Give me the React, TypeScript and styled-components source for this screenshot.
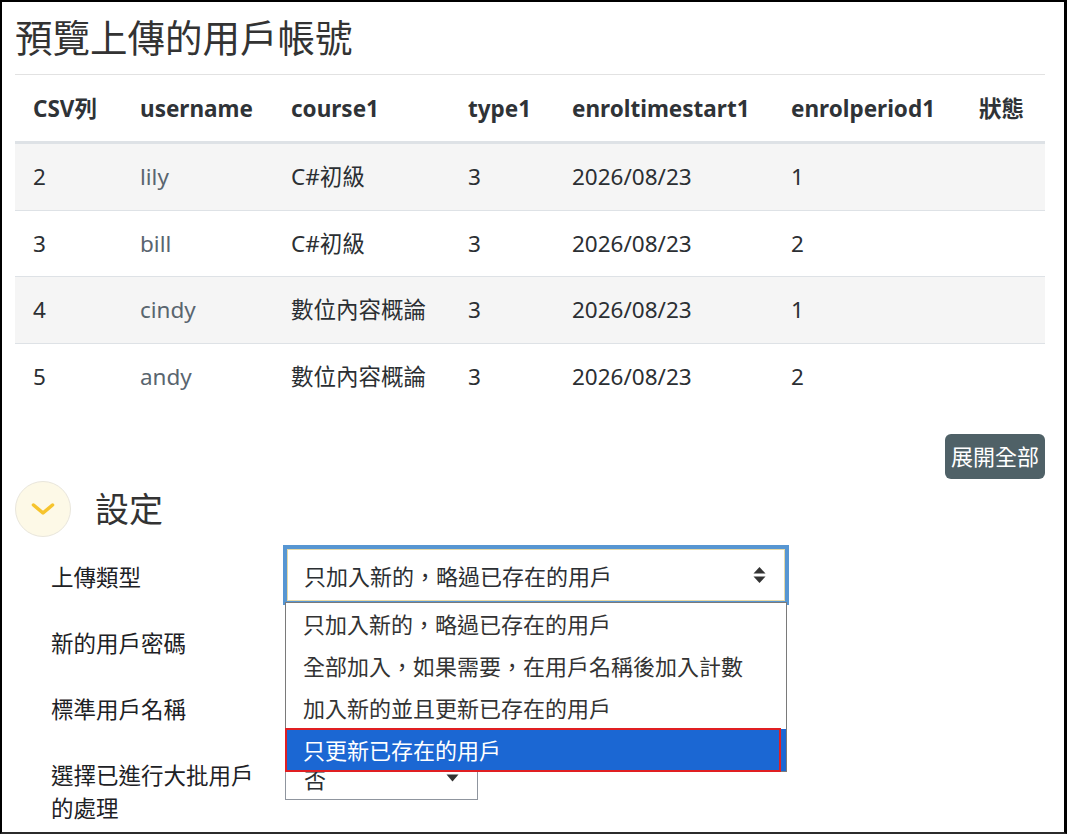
import styled, { createGlobalStyle } from 'styled-components';

const GlobalStyle = createGlobalStyle`
  html, body {
    margin: 0;
    padding: 0;
    background: #fff;
  }
  body {
    font-family: 'Noto Sans', 'Noto Sans CJK TC', sans-serif;
    color: #1d2125;
  }
  * {
    box-sizing: border-box;
  }
`;

interface IRow {
  csv: number;
  username: string;
  course: string;
  type: number;
  start: string;
  period: number;
}

const COLUMNS = ['CSV列', 'username', 'course1', 'type1', 'enroltimestart1', 'enrolperiod1', '狀態'];
const COL_WIDTHS = [107, 151, 177, 104, 219, 188, 84];

const ROWS: IRow[] = [
  { csv: 2, username: 'lily', course: 'C#初級', type: 3, start: '2026/08/23', period: 1 },
  { csv: 3, username: 'bill', course: 'C#初級', type: 3, start: '2026/08/23', period: 2 },
  { csv: 4, username: 'cindy', course: '數位內容概論', type: 3, start: '2026/08/23', period: 1 },
  { csv: 5, username: 'andy', course: '數位內容概論', type: 3, start: '2026/08/23', period: 2 },
];

const UPLOAD_TYPES = [
  '只加入新的，略過已存在的用戶',
  '全部加入，如果需要，在用戶名稱後加入計數',
  '加入新的並且更新已存在的用戶',
  '只更新已存在的用戶',
];

const Frame = styled.div`
  width: 1067px;
  height: 834px;
  overflow: hidden;
  background: #fff;
  border: 2px solid #000;
  border-right-width: 3px;
  border-bottom-color: #2b2b2b;
`;

const Page = styled.div`
  padding: 0 19px 0 13px;
`;

const Title = styled.h2`
  margin: 13px 0 0;
  font-size: 37.5px;
  line-height: 45px;
  font-weight: 400;
  color: #333;
`;

const Divider = styled.hr`
  margin: 14px 0 0;
  border: 0;
  border-top: 1px solid #e2e2e2;
`;

const Table = styled.table`
  width: 1030px;
  table-layout: fixed;
  border-collapse: separate;
  border-spacing: 0;
  font-size: 22.5px;
  line-height: 33px;
`;

const HeadCell = styled.th`
  padding: 16.5px 18px;
  text-align: left;
  font-weight: 700;
  color: #2f3337;
  white-space: nowrap;
  border-bottom: 2px solid #dee2e6;
`;

const BodyRow = styled.tr<{ $striped: boolean }>`
  background: ${({ $striped }) => ($striped ? '#f5f5f5' : '#fff')};
`;

const Cell = styled.td<{ $muted?: boolean }>`
  padding: 16.25px 18px;
  border-top: 1px solid #dee2e6;
  color: ${({ $muted }) => ($muted ? '#59656f' : '#2b2f33')};
  white-space: nowrap;
`;

const ActionBar = styled.div`
  display: flex;
  justify-content: flex-end;
  margin-top: 25px;
`;

const ExpandButton = styled.button`
  height: 45px;
  padding: 0 6px;
  border: 0;
  border-radius: 6px;
  background: #4f6167;
  color: #fff;
  font-family: inherit;
  font-size: 22px;
  line-height: 45px;
`;

const SectionHeader = styled.div`
  display: flex;
  align-items: center;
  gap: 24px;
  margin: 2px 0 16px;
`;

const ToggleCircle = styled.span`
  width: 56px;
  height: 56px;
  border-radius: 50%;
  background: #fdf9e7;
  border: 1px solid #e9e6dc;
  display: flex;
  align-items: center;
  justify-content: center;
`;

const SectionTitle = styled.h3`
  margin: 0;
  font-size: 34px;
  line-height: 45px;
  font-weight: 400;
  color: #333;
`;

const FormRow = styled.div<{ $last?: boolean }>`
  display: flex;
  align-items: flex-start;
  padding-left: 36px;
  height: ${({ $last }) => ($last ? 'auto' : '66px')};
`;

const Label = styled.label`
  width: 234px;
  flex: none;
  padding: 8px 19px 0 0;
  font-size: 22.5px;
  line-height: 33px;
  color: #1d2125;
`;

const Field = styled.div`
  position: relative;
`;

const Select = styled.div<{ $width: number; $height: number; $offset: number; $focused?: boolean }>`
  width: ${({ $width }) => $width}px;
  height: ${({ $height }) => $height}px;
  margin-top: ${({ $offset }) => $offset}px;
  margin-left: ${({ $focused }) => ($focused ? 2 : 0)}px;
  padding: 0 18px 0 ${({ $focused }) => ($focused ? 16 : 18)}px;
  display: flex;
  align-items: center;
  justify-content: space-between;
  background: #fff;
  border: 1px solid ${({ $focused }) => ($focused ? '#e6d9a8' : '#8f959e')};
  box-shadow: ${({ $focused }) => ($focused ? '0 0 0 4px #5796d2' : 'none')};
  font-size: 22px;
  color: #2b2f33;
`;

const OptionList = styled.ul`
  position: absolute;
  top: 49px;
  left: 0;
  z-index: 10;
  width: 502px;
  margin: 0;
  padding: 0;
  list-style: none;
  background: #fff;
  border: 1px solid #7a7a7a;
`;

const Option = styled.li<{ $active?: boolean }>`
  position: relative;
  height: 42px;
  padding-left: 17px;
  font-size: 22px;
  line-height: 42px;
  color: ${({ $active }) => ($active ? '#fff' : '#333')};
  background: ${({ $active }) => ($active ? '#1b67d3' : 'transparent')};

  &::after {
    content: '';
    display: ${({ $active }) => ($active ? 'block' : 'none')};
    position: absolute;
    top: -1px;
    left: -1px;
    right: 5px;
    bottom: -1px;
    border: 2px solid #e01f22;
  }
`;

const Chevron = () => (
  <svg width="24" height="12" viewBox="0 0 24 12">
    <polyline points="2.5,2 12,10 21.5,2" fill="none" stroke="#f6c42d" strokeWidth="3.5" strokeLinecap="round" strokeLinejoin="round" />
  </svg>
);

const SortArrows = () => (
  <svg width="13" height="18" viewBox="0 0 13 18">
    <polygon points="6.5,1 12.5,7.5 0.5,7.5" fill="#333" />
    <polygon points="6.5,17 12.5,10.5 0.5,10.5" fill="#333" />
  </svg>
);

const DownArrow = () => (
  <svg width="13" height="8" viewBox="0 0 13 8">
    <polygon points="0.5,0.5 12.5,0.5 6.5,7.5" fill="#333" />
  </svg>
);

const App = () => {
  return (
    <Frame>
      <GlobalStyle />
      <Page>
        <Title>預覽上傳的用戶帳號</Title>
        <Divider />
        <Table>
          <colgroup>
            {COL_WIDTHS.map((w, i) => (
              <col key={i} style={{ width: w }} />
            ))}
          </colgroup>
          <thead>
            <tr>
              {COLUMNS.map((c) => (
                <HeadCell key={c}>{c}</HeadCell>
              ))}
            </tr>
          </thead>
          <tbody>
            {ROWS.map((r, i) => (
              <BodyRow key={r.csv} $striped={i % 2 === 0}>
                <Cell>{r.csv}</Cell>
                <Cell $muted>{r.username}</Cell>
                <Cell>{r.course}</Cell>
                <Cell>{r.type}</Cell>
                <Cell>{r.start}</Cell>
                <Cell>{r.period}</Cell>
                <Cell />
              </BodyRow>
            ))}
          </tbody>
        </Table>

        <ActionBar>
          <ExpandButton>展開全部</ExpandButton>
        </ActionBar>

        <SectionHeader>
          <ToggleCircle>
            <Chevron />
          </ToggleCircle>
          <SectionTitle>設定</SectionTitle>
        </SectionHeader>

        <FormRow>
          <Label>上傳類型</Label>
          <Field>
            <Select $width={498} $height={52} $offset={-4} $focused>
              <span>{UPLOAD_TYPES[0]}</span>
              <SortArrows />
            </Select>
            <OptionList>
              {UPLOAD_TYPES.map((t, i) => (
                <Option key={t} $active={i === UPLOAD_TYPES.length - 1}>
                  {t}
                </Option>
              ))}
            </OptionList>
          </Field>
        </FormRow>
        <FormRow>
          <Label>新的用戶密碼</Label>
          <Field>
            <Select $width={300} $height={45} $offset={1} />
          </Field>
        </FormRow>
        <FormRow>
          <Label>標準用戶名稱</Label>
          <Field>
            <Select $width={300} $height={45} $offset={1} />
          </Field>
        </FormRow>
        <FormRow $last>
          <Label>選擇已進行大批用戶的處理</Label>
          <Field>
            <Select $width={193} $height={45} $offset={4}>
              <span>否</span>
              <DownArrow />
            </Select>
          </Field>
        </FormRow>
      </Page>
    </Frame>
  );
};

export default App;
